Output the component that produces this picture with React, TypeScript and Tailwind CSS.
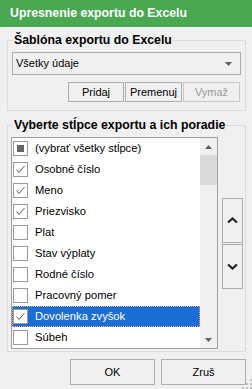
import React from 'react';

type Item = {
  label: string;
  state: 'ind' | 'on' | 'off';
  selected?: boolean;
};

const items: Item[] = [
  { label: '(vybrať všetky stĺpce)', state: 'ind' },
  { label: 'Osobné číslo', state: 'on' },
  { label: 'Meno', state: 'on' },
  { label: 'Priezvisko', state: 'on' },
  { label: 'Plat', state: 'off' },
  { label: 'Stav výplaty', state: 'off' },
  { label: 'Rodné číslo', state: 'off' },
  { label: 'Pracovný pomer', state: 'off' },
  { label: 'Dovolenka zvyšok', state: 'on', selected: true },
  { label: 'Súbeh', state: 'off' },
];

const CheckBox = ({ state }: { state: Item['state'] }) => (
  <div className="w-[15px] h-[15px] border border-[#9a9a9a] bg-white flex items-center justify-center shrink-0">
    {state === 'ind' && <div className="w-[7px] h-[7px] bg-[#666]" />}
    {state === 'on' && (
      <svg width="13" height="13" viewBox="0 0 13 13">
        <polyline points="2.5,6.5 5,9.5 10.5,3" fill="none" stroke="#5c5c5c" strokeWidth="1" />
      </svg>
    )}
  </div>
);

const Triangle = ({ down }: { down?: boolean }) => (
  <svg width="7" height="4" viewBox="0 0 7 4">
    <polygon points={down ? '0,0 7,0 3.5,4' : '0,4 7,4 3.5,0'} fill="#606060" />
  </svg>
);

const Chevron = ({ down }: { down?: boolean }) => (
  <svg width="11" height="7" viewBox="0 0 11 7">
    <polyline
      points={down ? '1,1.5 5.5,5.5 10,1.5' : '1,5.5 5.5,1.5 10,5.5'}
      fill="none"
      stroke="#222"
      strokeWidth="2.2"
    />
  </svg>
);

export default function App() {
  return (
    <div className="relative w-[252px] h-[389px] bg-[#f0f0f0] flex flex-col font-['Liberation_Sans',Arial,sans-serif] text-black overflow-hidden">
      <div className="h-[27px] bg-[#4aa853] flex items-center pl-[10px] text-white font-bold text-[12.3px]">
        Upresnenie exportu do Excelu
      </div>

      <fieldset className="mt-[6px] ml-[7px] w-[239px] border border-[#dcdcdc] px-[4px] pb-[8px]">
        <legend className="ml-[1px] px-[1px] font-bold text-[12.3px] leading-[14px]">
          Šablóna exportu do Excelu
        </legend>
        <div className="mt-[5px] h-[23px] border border-[#adadad] flex items-center pl-[3px] pr-[8px] text-[11px]">
          <span className="flex-1">Všetky údaje</span>
          <Triangle down />
        </div>
        <div className="mt-[7px] flex justify-end gap-[1px] pr-[1px] text-[11px]">
          <button className="w-[56px] h-[20px] border border-[#adadad] flex items-center justify-center">
            Pridaj
          </button>
          <button className="w-[57px] h-[20px] border border-[#adadad] flex items-center justify-center">
            Premenuj
          </button>
          <button className="w-[57px] h-[20px] border border-[#c8c8c8] flex items-center justify-center text-[#9a9a9a]">
            Vymaž
          </button>
        </div>
      </fieldset>

      <fieldset className="mt-[7px] ml-[7px] w-[239px] border border-[#dcdcdc] pl-[3px] pr-[2px] pb-[2px]">
        <legend className="ml-[2px] px-[1px] font-bold text-[12.3px] leading-[14px]">
          Vyberte stĺpce exportu a ich poradie
        </legend>
        <div className="mt-[5px] flex items-center gap-[4px]">
          <div className="w-[207px] h-[212px] border border-[#a0a0a0] bg-white flex text-[11.2px]">
            <div className="flex-1 flex flex-col">
              {items.map((it) => (
                <div
                  key={it.label}
                  className={`h-[21px] flex items-center gap-[7px] pl-[1px] ${
                    it.selected ? 'bg-[#1c6dd6] text-white outline outline-1 outline-dotted outline-offset-[-1px] outline-[#e8b070]' : ''
                  }`}
                >
                  <CheckBox state={it.state} />
                  <span>{it.label}</span>
                </div>
              ))}
            </div>
            <div className="w-[17px] bg-[#f0f0f0] flex flex-col">
              <div className="h-[17px] flex items-center justify-center">
                <Triangle />
              </div>
              <div className="h-[30px] bg-[#dadada]" />
              <div className="flex-1" />
              <div className="h-[17px] flex items-center justify-center">
                <Triangle down />
              </div>
            </div>
          </div>
          <div className="flex flex-col gap-[1px]">
            <button className="w-[21px] h-[45px] border border-[#adadad] flex items-center justify-center">
              <Chevron />
            </button>
            <button className="w-[21px] h-[45px] border border-[#adadad] flex items-center justify-center">
              <Chevron down />
            </button>
          </div>
        </div>
      </fieldset>

      <div className="mt-[7px] flex justify-end gap-[6px] pr-[6px] text-[11px]">
        <button className="w-[85px] h-[26px] border border-[#adadad] flex items-center justify-center">OK</button>
        <button className="w-[85px] h-[26px] border border-[#adadad] flex items-center justify-center">Zruš</button>
      </div>

      <svg className="absolute right-0 bottom-0" width="11" height="11" viewBox="0 0 11 11">
        {[
          [9, 1],
          [9, 5],
          [9, 9],
          [5, 5],
          [5, 9],
          [1, 9],
        ].map(([x, y]) => (
          <rect key={`${x}-${y}`} x={x} y={y} width="2" height="2" fill="#bdbdbd" />
        ))}
      </svg>
    </div>
  );
}
